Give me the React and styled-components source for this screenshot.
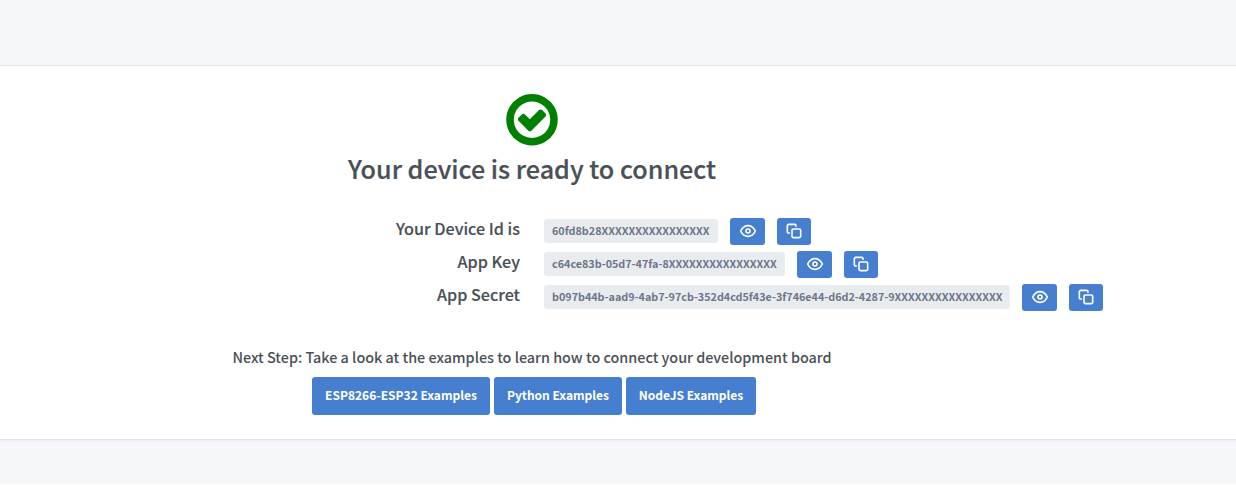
import React from "react";
import styled, { createGlobalStyle } from "styled-components";

const GlobalStyle = createGlobalStyle`
  *, *::before, *::after { box-sizing: border-box; }
  body {
    margin: 0;
    background: #fff;
    color: #495057;
    font-family: "Source Sans Pro", "Noto Sans CJK SC", sans-serif;
  }
`;

const Page = styled.main`
  height: 484px;
  padding-top: 65px;
  background: #f5f7fb;
  overflow: hidden;
`;

const Card = styled.section`
  height: 375px;
  padding: 28px 172px 0 0;
  background: #fff;
  border-top: 1px solid #e0e3e9;
  border-bottom: 1px solid #e0e3e9;
  box-shadow: 0 1px 2px rgba(0, 0, 0, 0.05);
  display: flex;
  flex-direction: column;
  align-items: center;
`;

const StatusIcon = styled.svg`
  display: block;
  width: 52px;
  height: 51.5px;
  margin-bottom: 0.5px;
  fill: #008000;
`;

const Title = styled.h1`
  margin: 6px 0 0;
  font-size: 25.15px;
  line-height: 32px;
  font-weight: 500;
  white-space: nowrap;
  -webkit-text-stroke: 0.2px currentColor;
`;

const Credentials = styled.dl`
  align-self: stretch;
  margin: 34px 0 0;
  display: grid;
  row-gap: 6px;
`;

const Credential = styled.div`
  display: grid;
  grid-template-columns: 520px max-content;
  column-gap: 24px;
  height: 27px;
`;

const Label = styled.dt`
  text-align: right;
  font-size: 16.15px;
  line-height: 20px;
  font-weight: 500;
  -webkit-text-stroke: 0.15px currentColor;
`;

const Value = styled.dd`
  margin: 0;
  display: flex;
  align-items: center;
  gap: 12px;
`;

const Tag = styled.span`
  width: ${(p) => p.$width}px;
  height: 24px;
  margin-bottom: 1px;
  padding: 0 8px;
  border-radius: 3px;
  background: #e9ecef;
  color: #6e7687;
  font-size: 10.78px;
  line-height: 23px;
  font-weight: 700;
  white-space: nowrap;
`;

const Button = styled.button`
  border: 0;
  border-radius: 3px;
  background: #467fcf;
  color: #fff;
  font-family: inherit;
  font-weight: 700;
`;

const IconButton = styled(Button)`
  width: ${(p) => p.$width}px;
  height: 27px;
  padding: 0 0 1px;
  display: flex;
  align-items: center;
  justify-content: center;
`;

const LineIcon = styled.svg`
  width: 16px;
  height: 16px;
  fill: none;
  stroke: currentColor;
  stroke-width: 2.4;
  stroke-linecap: round;
  stroke-linejoin: round;
`;

const NextStep = styled.p`
  margin: 34px 0 0;
  font-size: 14.37px;
  line-height: 24px;
  font-weight: 500;
  white-space: nowrap;
`;

const Examples = styled.div`
  margin: 8px 0 0 4px;
  display: flex;
  gap: 4px;
`;

const ExampleButton = styled(Button)`
  width: ${(p) => p.$width}px;
  height: 38px;
  padding: 0 0 2px;
  font-size: 12px;
  line-height: 36px;
  white-space: nowrap;
`;

const credentials = [
  { label: "Your Device Id is", value: "60fd8b28XXXXXXXXXXXXXXXX", width: 174 },
  { label: "App Key", value: "c64ce83b-05d7-47fa-8XXXXXXXXXXXXXXXX", width: 241 },
  {
    label: "App Secret",
    value: "b097b44b-aad9-4ab7-97cb-352d4cd5f43e-3f746e44-d6d2-4287-9XXXXXXXXXXXXXXXX",
    width: 466,
  },
];

const examples = [
  { label: "ESP8266-ESP32 Examples", width: 178 },
  { label: "Python Examples", width: 128 },
  { label: "NodeJS Examples", width: 130 },
];

const CheckCircle = () => (
  <StatusIcon viewBox="0 128 1536 1536" aria-hidden="true">
    <path d="M1171 800l-422 422q-19 19-45 19t-45-19l-294-294q-19-19-19-45t19-45l102-102q19-19 45-19t45 19l147 147 275-275q19-19 45-19t45 19l102 102q19 19 19 45t-19 45z" />
    <path d="M1312 896q0-148-73-273t-198-198-273-73-273 73-198 198-73 273 73 273 198 198 273 73 273-73 198-198 73-273zm224 0q0 209-103 385.5t-279.5 279.5-385.5 103-385.5-103-279.5-279.5-103-385.5 103-385.5 279.5-279.5 385.5-103 385.5 103 279.5 279.5 103 385.5z" />
  </StatusIcon>
);

const EyeIcon = () => (
  <LineIcon viewBox="0 0 24 24">
    <path d="M1 12s4-8 11-8 11 8 11 8-4 8-11 8-11-8-11-8z" />
    <circle cx="12" cy="12" r="3" />
  </LineIcon>
);

const CopyIcon = () => (
  <LineIcon viewBox="0 0 24 24">
    <rect x="9" y="9" width="13" height="13" rx="2" />
    <path d="M5 15H4a2 2 0 0 1-2-2V4a2 2 0 0 1 2-2h9a2 2 0 0 1 2 2v1" />
  </LineIcon>
);

export default function App() {
  return (
    <>
      <GlobalStyle />
      <Page>
        <Card>
          <CheckCircle />
          <Title>Your device is ready to connect</Title>
          <Credentials>
            {credentials.map((c) => (
              <Credential key={c.label}>
                <Label>{c.label}</Label>
                <Value>
                  <Tag $width={c.width}>{c.value}</Tag>
                  <IconButton $width={35} aria-label="Show"><EyeIcon /></IconButton>
                  <IconButton $width={34} aria-label="Copy"><CopyIcon /></IconButton>
                </Value>
              </Credential>
            ))}
          </Credentials>
          <NextStep>
            Next Step: Take a look at the examples to learn how to connect your development board
          </NextStep>
          <Examples>
            {examples.map((e) => (
              <ExampleButton key={e.label} $width={e.width}>{e.label}</ExampleButton>
            ))}
          </Examples>
        </Card>
      </Page>
    </>
  );
}
